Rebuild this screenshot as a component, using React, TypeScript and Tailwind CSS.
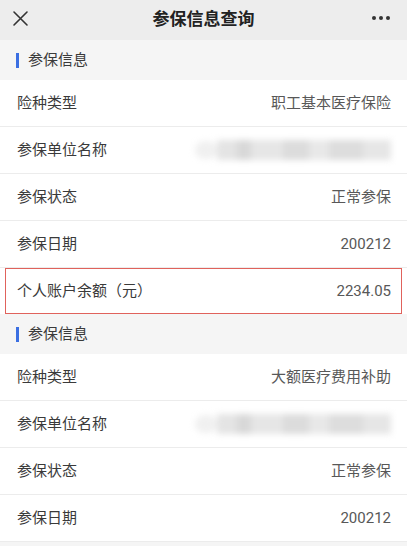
import React from "react";

function Blur() {
  return (
    <div className="relative h-[26px] w-[196px]">
      <div className="absolute inset-0 flex items-center blur-[3px]">
        <div className="h-[18px] w-[22px] rounded-full bg-[#f0f0f0]" />
        <div className="h-[20px] w-[20px] bg-[#e4e4e4]" />
        <div className="h-[20px] w-[14px] bg-[#d8d8d8]" />
        <div className="h-[20px] w-[32px] bg-[#e6e6e6]" />
        <div className="h-[20px] w-[26px] bg-[#dcdcdc]" />
        <div className="h-[20px] w-[20px] bg-[#e8e8e8]" />
        <div className="h-[20px] w-[34px] bg-[#dddddd]" />
        <div className="h-[20px] w-[28px] bg-[#e6e6e6]" />
      </div>
    </div>
  );
}

function Row({ label, value, blur }: { label: string; value?: string; blur?: boolean }) {
  return (
    <div className="flex h-[47px] items-center justify-between border-b border-[#ececec] bg-white pl-[17px] pr-[16px]">
      <span className="text-[15px] text-[#3a3a3a]">{label}</span>
      {blur ? <Blur /> : <span className="text-[15px] text-[#585858]">{value}</span>}
    </div>
  );
}

function Section({ title }: { title: string }) {
  return (
    <div className="flex h-[40px] items-center bg-[#f5f5f5] pl-[16px]">
      <div className="h-[15px] w-[3px] bg-[#3b6fe2]" />
      <span className="ml-[9px] text-[15px] text-[#3a3a3a]">{title}</span>
    </div>
  );
}

export default function App() {
  return (
    <div
      className="h-[546px] w-[407px] overflow-hidden bg-[#f5f5f5]"
      style={{ fontFamily: 'Roboto, "Noto Sans CJK SC", "Noto Sans", sans-serif' }}
    >
      <div className="relative flex h-[40px] items-center justify-center bg-[#ededed]">
        <svg className="absolute left-[12px] top-[10px]" width="17" height="17" viewBox="0 0 17 17">
          <path d="M2 2 L15 15 M15 2 L2 15" stroke="#333" strokeWidth="1.6" strokeLinecap="round" />
        </svg>
        <span className="text-[17px] font-semibold text-[#222]">参保信息查询</span>
        <div className="absolute right-[17px] top-[16px] flex gap-[3px]">
          <div className="h-[4px] w-[4px] rounded-full bg-[#333]" />
          <div className="h-[4px] w-[4px] rounded-full bg-[#333]" />
          <div className="h-[4px] w-[4px] rounded-full bg-[#333]" />
        </div>
      </div>
      <Section title="参保信息" />
      <Row label="险种类型" value="职工基本医疗保险" />
      <Row label="参保单位名称" blur />
      <Row label="参保状态" value="正常参保" />
      <Row label="参保日期" value="200212" />
      <div className="bg-white px-[5px]">
        <div className="flex h-[46px] items-center justify-between border-[1.5px] border-[#e0625c] pl-[11px] pr-[10px]">
          <span className="text-[15px] text-[#3a3a3a]">个人账户余额（元）</span>
          <span className="text-[15px] text-[#585858]">2234.05</span>
        </div>
      </div>
      <Section title="参保信息" />
      <Row label="险种类型" value="大额医疗费用补助" />
      <Row label="参保单位名称" blur />
      <Row label="参保状态" value="正常参保" />
      <Row label="参保日期" value="200212" />
    </div>
  );
}
